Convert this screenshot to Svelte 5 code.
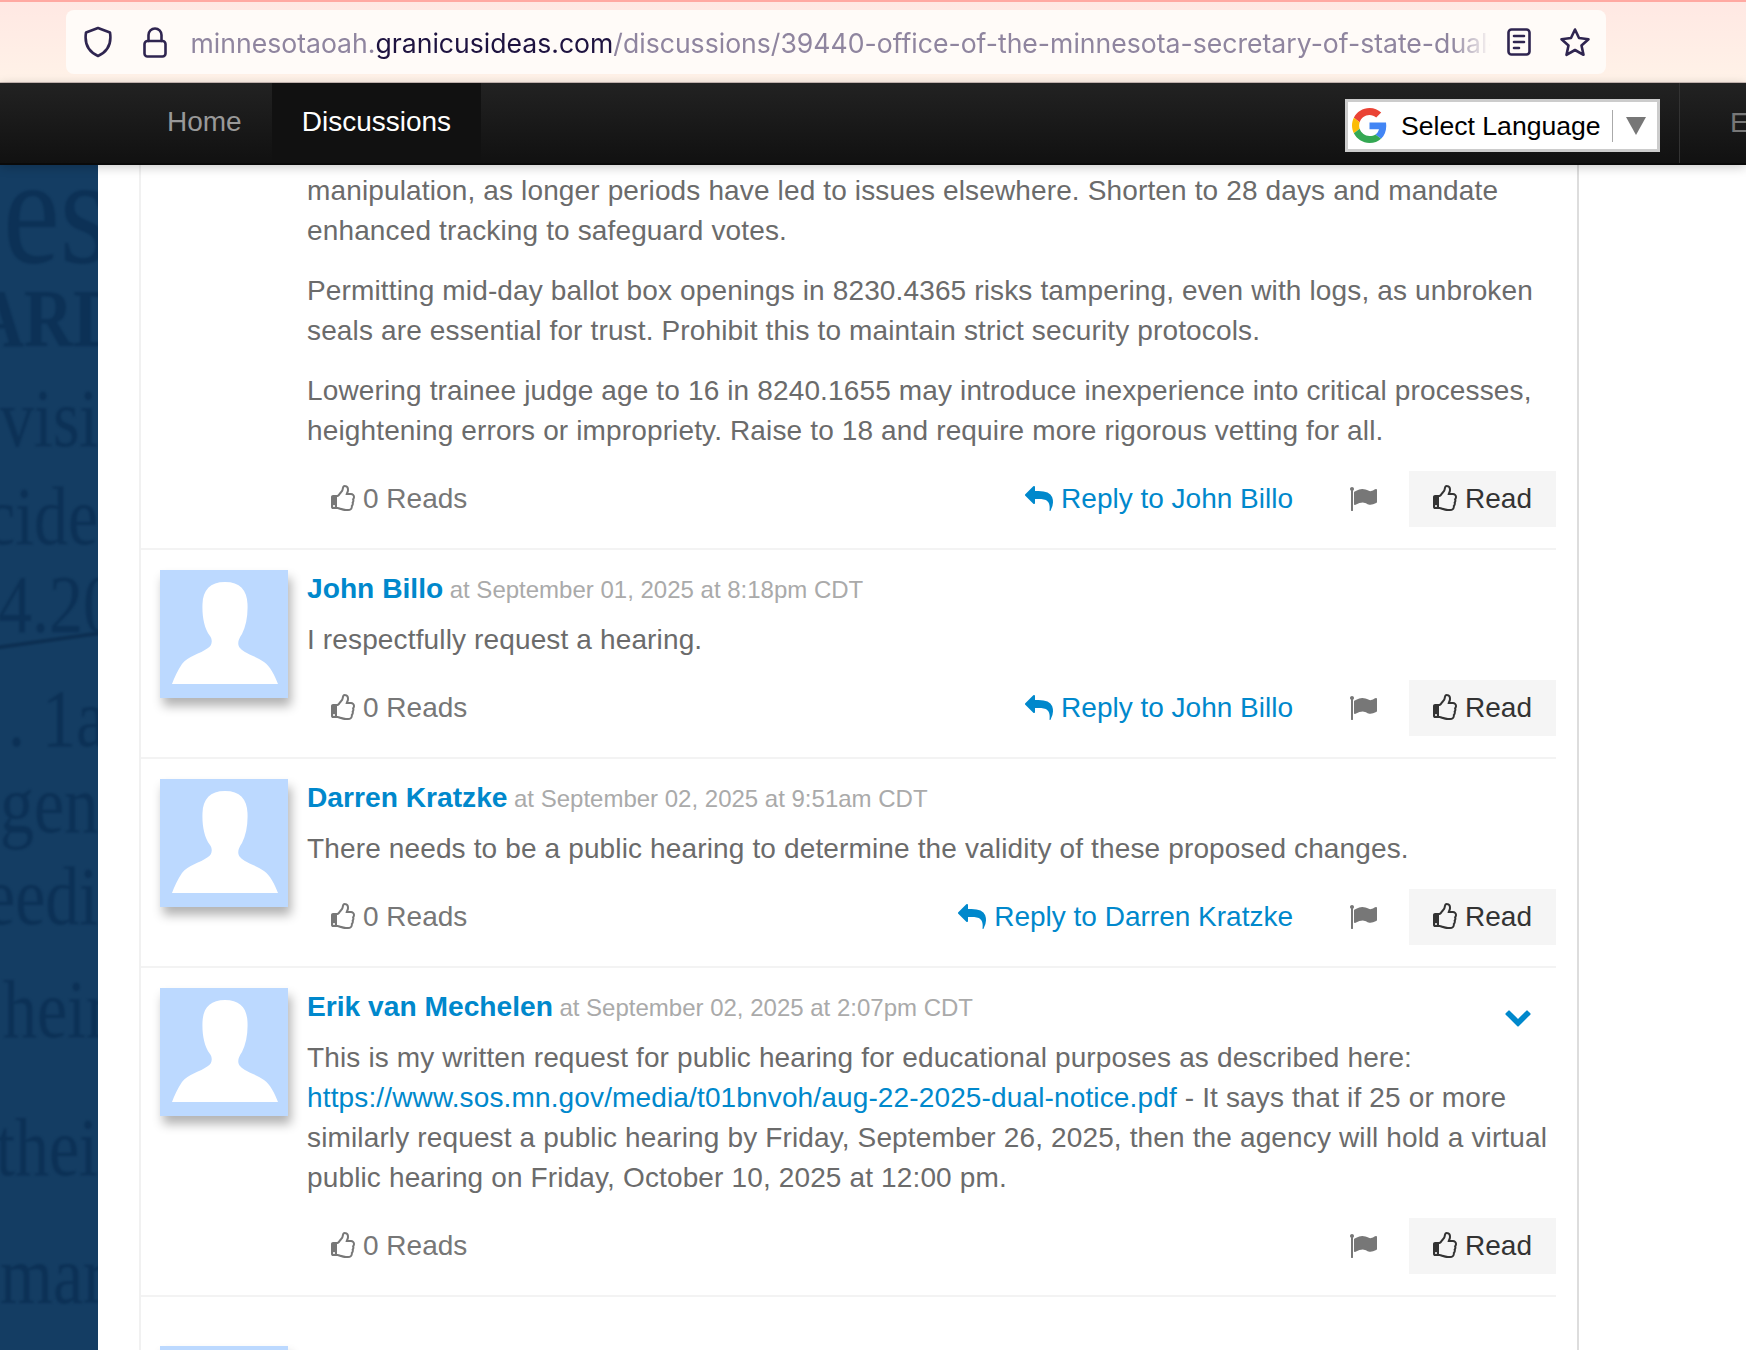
<script>
	const thumbPath =
		'M384 1344q0-26-19-45t-45-19-45 19-19 45 19 45 45 19 45-19 19-45zm1152-576q0-51-39-89.5t-89-38.5h-352q0-58 48-159.5t48-160.5q0-98-32-145t-128-47q-26 26-38 85t-30.5 125.5-59.5 109.5q-22 23-77 91-4 5-23 30t-31.5 41-34.5 42.5-40 44-38.5 35.5-40 27-35.5 9h-32v640h32q13 0 31.5 3t33 6.5 38 11 35 11.5 35.5 12.5 29 10.5q211 73 342 73h121q192 0 192-167 0-26-5-56 30-16 47.5-52.5t17.5-73.5-18-69q53-50 53-119 0-25-10-55.5t-25-47.5q32-1 53.5-47t21.5-81zm128-1q0 89-49 163 9 33 9 69 0 77-38 144 3 21 3 43 0 101-60 178 1 139-85 219.5t-227 80.5h-129q-96 0-189.5-22.5t-216.5-65.5q-116-40-138-40h-288q-53 0-90.5-37.5t-37.5-90.5v-640q0-53 37.5-90.5t90.5-37.5h274q36-24 137-155 58-75 107-128 24-25 35.5-85.5t30.5-126.5 62-108q39-37 90-37 84 0 151 32.5t102 101.5 35 186q0 93-48 192h176q104 0 180 76t76 179z';
	const replyPath =
		'M1792 1120q0 166-127 451-3 7-10.5 24t-13.5 30-13 22q-12 17-28 17-15 0-23.5-10t-8.5-25q0-9 2.5-26.5t2.5-23.5q5-68 5-123 0-101-17.5-181t-48.5-138.5-80-101-105.5-69.5-133-42.5-154-21.5-175.5-6h-224v256q0 26-19 45t-45 19-45-19l-512-512q-19-19-19-45t19-45l512-512q19-19 45-19t45 19 19 45v256h224q713 0 875 403 53 134 53 333z';
	const flagPath =
		'M320 256q0 72-64 110v1266q0 13-9.5 22.5t-22.5 9.5h-64q-13 0-22.5-9.5t-9.5-22.5v-1266q-64-38-64-110 0-53 37.5-90.5t90.5-37.5 90.5 37.5 37.5 90.5zm1472 64v763q0 25-12.5 38.5t-39.5 27.5q-215 116-369 116-61 0-123.5-22t-108.5-48-115.5-48-142.5-22q-192 0-464 146-17 9-33 9-26 0-45-19t-19-45v-742q0-32 31-55 21-14 79-43 236-120 421-120 107 0 200 29t219 88q38 19 88 19 54 0 117.5-21t110-47 88-47 54.5-21q26 0 45 19t19 45z';
	const chevronPath =
		'M1683 808l-742 741q-19 19-45 19t-45-19l-742-741q-19-19-19-45.5t19-45.5l166-165q19-19 45-19t45 19l531 531 531-531q19-19 45-19t45 19l166 165q19 19 19 45.5t-19 45.5z';

	// the blurred scan behind the page, cut off by the white column
	const scan = [
		{ text: 'es', left: 3, base: 262, size: 128, weight: 400 },
		{ text: 'ARD', left: -25, base: 346, size: 68, weight: 700 },
		{ text: 'visi', left: 0, base: 446, size: 68, weight: 400 },
		{ text: 'cide', left: -15, base: 544, size: 68, weight: 400 },
		{ text: '4.20', left: -2, base: 632, size: 68, weight: 400 },
		{ text: '. 1a', left: 8, base: 746, size: 68, weight: 400 },
		{ text: 'gen', left: 0, base: 832, size: 68, weight: 400 },
		{ text: 'eedi', left: -15, base: 924, size: 68, weight: 400 },
		{ text: 'hein', left: 3, base: 1037, size: 68, weight: 400 },
		{ text: 'thei', left: -4, base: 1175, size: 68, weight: 400 },
		{ text: 'mar', left: 0, base: 1303, size: 68, weight: 400 }
	];
</script>

{#snippet fa(d, cls)}
	<svg class={cls} viewBox="0 0 1792 1792" aria-hidden="true"><path {d} fill="currentColor" /></svg>
{/snippet}

{#snippet actions(name)}
	<div class="actions">
		<span class="reads">{@render fa(thumbPath, 'thumb')}0 Reads</span>
		{#if name}
			<a class="reply" href="#reply">{@render fa(replyPath, 'reply-icon')}Reply to {name}</a>
		{/if}
		<span class="flag">{@render fa(flagPath, 'flag-icon')}</span>
		<button class="read">{@render fa(thumbPath, 'thumb')}Read</button>
	</div>
{/snippet}

{#snippet avatar()}
	<div class="avatar">
		<svg viewBox="0 0 128 128" aria-hidden="true">
			<path
				fill="#fff"
				d="M65 12C50 12 43 20 42.500 34C42 46 44 58 50 66C53 70 52 76 48 78C40 84 28 86 22 94C18 100 14 108 12 114L118 114C115 106 110 96 104 92C96 86 85 84 80 78C77 74 78 70 82 64C86 56 88 46 87.500 34C87 20 80 12 65 12Z"
			/>
		</svg>
	</div>
{/snippet}

<div class="page">
	<div class="browser">
		<div class="urlbar">
			<svg class="shield" viewBox="0 0 30 32" aria-hidden="true">
				<path d="M15 2 L27 6.500 C28.500 16 26 25 15 30 C4 25 1.500 16 3 6.500 Z" />
			</svg>
			<svg class="lock" viewBox="0 0 24 32" aria-hidden="true">
				<path d="M5.500 15V9a6.500 6.500 0 0 1 13 0v6" />
				<rect x="1.500" y="15" width="21" height="15.500" rx="3" />
			</svg>
			<div class="url">
				<span class="dim">minnesotaoah.</span><span class="domain">granicusideas.com</span><span class="dim">/discussions/39440-office-of-the-minnesota-secretary-of-state-dual-notice</span>
			</div>
			<svg class="reader" viewBox="0 0 24 28" aria-hidden="true">
				<rect x="1.500" y="1.500" width="21" height="25" rx="3" />
				<path d="M7 8h10M7 14h10M7 20h5" />
			</svg>
			<svg class="star" viewBox="0 0 32 30" aria-hidden="true">
				<path d="M16 2.500 L20 11 L29.500 12.200 L22.500 18.500 L24.500 27.800 L16 23 L7.500 27.800 L9.500 18.500 L2.500 12.200 L12 11 Z" />
			</svg>
		</div>
	</div>

	<nav class="nav">
		<a class="tab" href="#home">Home</a>
		<a class="tab active" href="#discussions">Discussions</a>
		<div class="lang">
			<svg class="g" viewBox="0 0 48 48" aria-hidden="true">
				<path fill="#EA4335" d="M24 9.500c3.540 0 6.710 1.220 9.210 3.600l6.850-6.850C35.900 2.380 30.470 0 24 0 14.620 0 6.510 5.380 2.560 13.220l7.980 6.190C12.430 13.720 17.740 9.500 24 9.500z" />
				<path fill="#4285F4" d="M46.980 24.550c0-1.570-.15-3.090-.38-4.550H24v9.020h12.940c-.58 2.960-2.260 5.480-4.780 7.180l7.730 6c4.510-4.180 7.090-10.360 7.090-17.650z" />
				<path fill="#FBBC05" d="M10.530 28.590c-.48-1.450-.76-2.990-.76-4.590s.27-3.140.76-4.590l-7.980-6.190C.92 16.460 0 20.120 0 24c0 3.880.92 7.540 2.560 10.780l7.970-6.190z" />
				<path fill="#34A853" d="M24 48c6.480 0 11.930-2.130 15.890-5.810l-7.730-6c-2.150 1.450-4.920 2.300-8.160 2.300-6.260 0-11.570-4.220-13.470-9.910l-7.980 6.190C6.510 42.620 14.620 48 24 48z" />
			</svg>
			<span class="lang-label">Select Language</span>
			<span class="lang-arrow"></span>
		</div>
		<div class="nav-end">E</div>
	</nav>

	<main class="main">
		<div class="scan">
			{#each scan as line}
				<span
					class="scan-line"
					style="left:{line.left}px;top:{line.base - 164 - line.size * 0.9375}px;font-size:{line.size}px;line-height:{line.size * 1.2}px;font-weight:{line.weight};transform-origin:0 {line.size * 0.9375}px"
				>{line.text}</span>
			{/each}
			<div class="scan-rule"></div>
		</div>

		<div class="column">
			<div class="card">
				<section class="comment first">
					<div class="body">
						<p>manipulation, as longer periods have led to issues elsewhere. Shorten to 28 days and mandate enhanced tracking to safeguard votes.</p>
						<p>Permitting mid-day ballot box openings in 8230.4365 risks tampering, even with logs, as unbroken seals are essential for trust. Prohibit this to maintain strict security protocols.</p>
						<p>Lowering trainee judge age to 16 in 8240.1655 may introduce inexperience into critical processes, heightening errors or impropriety. Raise to 18 and require more rigorous vetting for all.</p>
						{@render actions('John Billo')}
					</div>
				</section>

				<section class="comment">
					{@render avatar()}
					<div class="body">
						<div class="meta"><a class="author" href="#author">John Billo</a> <span class="date">at September 01, 2025 at 8:18pm CDT</span></div>
						<p>I respectfully request a hearing.</p>
						{@render actions('John Billo')}
					</div>
				</section>

				<section class="comment">
					{@render avatar()}
					<div class="body">
						<div class="meta"><a class="author" href="#author">Darren Kratzke</a> <span class="date">at September 02, 2025 at 9:51am CDT</span></div>
						<p>There needs to be a public hearing to determine the validity of these proposed changes.</p>
						{@render actions('Darren Kratzke')}
					</div>
				</section>

				<section class="comment">
					{@render avatar()}
					<div class="body">
						<div class="meta"><a class="author" href="#author">Erik van Mechelen</a> <span class="date">at September 02, 2025 at 2:07pm CDT</span></div>
						<p>This is my written request for public hearing for educational purposes as described here: <a class="link" href="#pdf">https://www.sos.mn.gov/media/t01bnvoh/aug-22-2025-dual-notice.pdf</a> - It says that if 25 or more similarly request a public hearing by Friday, September 26, 2025, then the agency will hold a virtual public hearing on Friday, October 10, 2025 at 12:00 pm.</p>
						{@render actions('')}
					</div>
					<span class="more">{@render fa(chevronPath, 'chevron')}</span>
				</section>

				<section class="comment next">
					{@render avatar()}
				</section>
			</div>
		</div>
	</main>
</div>

<style>
	:global(body) {
		margin: 0;
		background: #fff;
	}

	.page {
		height: 1350px;
		overflow: hidden;
		display: flex;
		flex-direction: column;
		font-family: 'Liberation Sans', Arial, sans-serif;
	}

	.browser {
		flex: none;
		border-top: 2px solid #ffa9a2;
		border-bottom: 1px solid #cdbdb8;
		background: linear-gradient(180deg, #ffe8e3 0%, #fff2e8 100%);
		padding: 8px 140px 8px 66px;
	}
	.urlbar {
		height: 64px;
		background: #fffbf8;
		border-radius: 8px;
		display: flex;
		align-items: center;
		padding-left: 17px;
		padding-right: 16px;
	}
	.urlbar svg {
		flex: none;
		fill: none;
		stroke: #2f2550;
		stroke-width: 2.6;
		stroke-linejoin: round;
		stroke-linecap: round;
	}
	.shield {
		width: 30px;
		height: 32px;
	}
	.lock {
		width: 24px;
		height: 32px;
		margin-left: 30px;
	}
	.url {
		margin-left: 23.500px;
		width: 1300px;
		flex: none;
		overflow: hidden;
		white-space: nowrap;
		font-family: Inter, 'Liberation Sans', sans-serif;
		font-size: 26.600px;
		line-height: 36px;
		padding-top: 2px;
		-webkit-mask-image: linear-gradient(90deg, #000 97%, transparent 100%);
		mask-image: linear-gradient(90deg, #000 97%, transparent 100%);
	}
	.dim {
		color: #8f859f;
	}
	.domain {
		color: #1e1340;
	}
	.reader {
		width: 24px;
		height: 28px;
		margin-left: 16px;
	}
	.star {
		width: 32px;
		height: 30px;
		margin-left: 28px;
	}

	.nav {
		height: 80px;
		flex: none;
		position: relative;
		z-index: 2;
		display: flex;
		align-items: stretch;
		padding-left: 137px;
		background: linear-gradient(180deg, #222 0%, #111 100%);
		border-bottom: 2px solid #0a0a0a;
		box-shadow: 0 2px 10px rgba(0, 0, 0, 0.22);
		font-size: 28px;
	}
	.tab {
		display: flex;
		align-items: center;
		padding: 0 30px 2px;
		color: #999;
		text-decoration: none;
	}
	.tab.active {
		background: #111;
		color: #fff;
	}
	.lang {
		margin-left: auto;
		align-self: flex-start;
		margin-top: 16px;
		width: 305px;
		height: 47px;
		border: 3px solid #ccc;
		background: #fff;
		display: flex;
		align-items: center;
		padding-left: 4px;
		color: #000;
	}
	.g {
		width: 35px;
		height: 35px;
		flex: none;
	}
	.lang-label {
		margin-left: 14px;
		font-size: 26.600px;
		width: 211px;
		border-right: 1px solid #aaa;
		line-height: 32px;
		white-space: nowrap;
	}
	.lang-arrow {
		margin-left: 13px;
		width: 0;
		height: 0;
		border-left: 10px solid transparent;
		border-right: 10px solid transparent;
		border-top: 18px solid #777;
	}
	.nav-end {
		margin-left: 19px;
		width: 67px;
		border-left: 1px solid #333;
		box-sizing: border-box;
		padding-left: 50px;
		display: flex;
		align-items: center;
		color: #777;
		overflow: hidden;
	}

	.main {
		flex: 1;
		display: flex;
		min-height: 0;
	}
	.scan {
		width: 98px;
		flex: none;
		position: relative;
		overflow: hidden;
		background: #143d63;
	}
	.scan-line {
		position: absolute;
		white-space: nowrap;
		font-family: 'Liberation Serif', 'Times New Roman', serif;
		color: #0c3156;
		filter: blur(0.8px);
		transform: scaleY(1.2);
	}
	.scan-rule {
		position: absolute;
		left: -4px;
		top: 473px;
		width: 110px;
		height: 4px;
		background: #0c2f52;
		filter: blur(0.8px);
		transform: rotate(-8deg);
	}

	.column {
		flex: 1;
		padding-left: 41px;
		min-width: 0;
	}
	.card {
		width: 1436px;
		height: 100%;
		border-left: 2px solid #f1f1f1;
		border-right: 2px solid #ddd;
	}

	.comment {
		position: relative;
		display: flex;
		margin-right: 21px;
		padding: 20px 0 21px 19px;
		gap: 19px;
		border-bottom: 2px solid #f3f3f3;
	}
	.comment.first {
		padding-top: 5.700px;
		padding-left: 166px;
	}
	.comment.next {
		border-bottom: none;
		padding-top: 49px;
	}
	.body {
		flex: 1;
		min-width: 0;
	}
	.avatar {
		width: 128px;
		height: 128px;
		flex: none;
		background: #bcd9ff;
		box-shadow: 3px 8px 10px rgba(0, 0, 0, 0.3);
	}
	.avatar svg {
		display: block;
		width: 128px;
		height: 128px;
	}

	.meta {
		height: 36px;
		line-height: 36px;
		white-space: nowrap;
	}
	.author {
		font-size: 28.200px;
		font-weight: 700;
		color: #0088cc;
		text-decoration: none;
	}
	.date {
		margin-left: 2px;
		font-size: 24px;
		color: #aaa;
	}
	.meta + p {
		margin-top: 14px;
	}

	p {
		margin: 0 0 20px;
		font-size: 28px;
		letter-spacing: 0.14px;
		line-height: 40px;
		color: #6b6b6b;
	}
	.link {
		color: #0088cc;
		text-decoration: none;
	}

	.actions {
		height: 56px;
		display: flex;
		align-items: center;
		font-size: 28px;
		line-height: 40px;
	}
	.reads {
		margin-left: 24px;
		margin-right: auto;
		display: flex;
		align-items: center;
		color: #777;
	}
	.thumb {
		width: 28px;
		height: 28px;
		margin-right: 6px;
		margin-left: -2px;
	}
	.reply {
		display: flex;
		align-items: center;
		color: #0088cc;
		text-decoration: none;
		margin-right: 56px;
	}
	.reply-icon {
		width: 28px;
		height: 28px;
		margin-right: 8px;
	}
	.flag {
		display: flex;
		color: #777;
		margin-right: 32px;
	}
	.flag-icon {
		width: 28px;
		height: 28px;
	}
	.read {
		width: 147px;
		height: 56px;
		border: none;
		background: #f5f5f5;
		color: #333;
		font: inherit;
		display: flex;
		align-items: center;
		justify-content: center;
		padding: 0;
	}
	.more {
		position: absolute;
		right: 24px;
		top: 34px;
		display: flex;
		color: #0088cc;
	}
	.chevron {
		width: 28px;
		height: 28px;
	}
</style>
